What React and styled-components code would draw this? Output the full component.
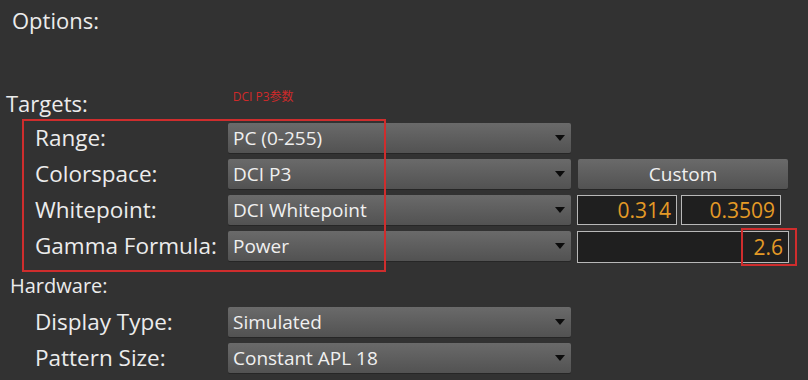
import styled, { createGlobalStyle } from "styled-components";

const GlobalStyle = createGlobalStyle`
  body {
    margin: 0;
    background: #323232;
    font-family: "Open Sans", "Noto Sans", "Noto Sans CJK SC", sans-serif;
    color: #ececec;
  }
`;

const Page = styled.div`
  position: relative;
  width: 808px;
  height: 380px;
  overflow: hidden;
  background: #323232;
`;

const Title = styled.div`
  font-size: 22px;
  line-height: 30px;
  padding: 5px 0 0 12px;
`;

const SectionHead = styled.div`
  display: flex;
  align-items: flex-start;
  margin: ${(p) => p.$top}px 0 0 ${(p) => p.$left}px;
  font-size: ${(p) => p.$size}px;
  line-height: ${(p) => p.$line}px;
`;

const Note = styled.span`
  margin-left: 145px;
  margin-top: 2px;
  font-size: 12px;
  line-height: 14px;
  color: #d02a2a;
`;

const Grid = styled.div`
  display: grid;
  grid-template-columns: 193px 343px 218px;
  grid-auto-rows: 30px;
  column-gap: 0;
  row-gap: 6px;
  margin-left: 35px;
  margin-top: ${(p) => p.$top}px;
`;

const Label = styled.div`
  font-size: 22.5px;
  line-height: 30px;
  white-space: nowrap;
`;

const Select = styled.div`
  display: flex;
  align-items: center;
  justify-content: space-between;
  padding: 0 6px 0 5px;
  background: linear-gradient(#6a6a6a, #525252);
  border-radius: 2px;
  box-shadow: 0 1px 0 #262626;
  font-size: 19px;
  color: #f0f0f0;
`;

const Arrow = styled.span`
  width: 0;
  height: 0;
  border-left: 5px solid transparent;
  border-right: 5px solid transparent;
  border-top: 6px solid #0c0c0c;
`;

const Side = styled.div`
  display: flex;
  gap: 4px;
  padding-left: 6px;
`;

const Button = styled.div`
  flex: 1;
  margin: 0 1px 0 1px;
  display: flex;
  align-items: center;
  justify-content: center;
  background: linear-gradient(#6a6a6a, #525252);
  border-radius: 2px;
  box-shadow: 0 1px 0 #262626;
  font-size: 19px;
  color: #f0f0f0;
`;

const Field = styled.div`
  width: ${(p) => (p.$w ? `${p.$w}px` : "auto")};
  flex: ${(p) => (p.$w ? "none" : 1)};
  height: ${(p) => p.$h || 30}px;
  box-sizing: border-box;
  border: 1px solid #b8b8b8;
  background: #1f1f1f;
  display: flex;
  align-items: center;
  justify-content: flex-end;
  padding-right: 5px;
  font-size: 21px;
  color: #e49a26;
`;

const Mark = styled.div`
  position: absolute;
  left: ${(p) => p.$x}px;
  top: ${(p) => p.$y}px;
  width: ${(p) => p.$w}px;
  height: ${(p) => p.$h}px;
  box-sizing: border-box;
  border: 2px solid #cf2d2d;
  pointer-events: none;
`;

const Dropdown = ({ value }) => (
  <Select>
    <span>{value}</span>
    <Arrow />
  </Select>
);

const App = () => (
  <Page>
    <GlobalStyle />
    <Title>Options:</Title>
    <SectionHead $top={53} $left={6} $size={22} $line={30}>
      Targets:
      <Note>DCI P3参数</Note>
    </SectionHead>
    <Grid $top={5}>
      <Label>Range:</Label>
      <Dropdown value="PC (0-255)" />
      <div />
      <Label>Colorspace:</Label>
      <Dropdown value="DCI P3" />
      <Side>
        <Button>Custom</Button>
      </Side>
      <Label>Whitepoint:</Label>
      <Dropdown value="DCI Whitepoint" />
      <Side>
        <Field $w={100}>0.314</Field>
        <Field $w={100}>0.3509</Field>
      </Side>
      <Label>Gamma Formula:</Label>
      <Dropdown value="Power" />
      <Side>
        <Field $h={32}>2.6</Field>
      </Side>
    </Grid>
    <SectionHead $top={12} $left={10} $size={20} $line={26}>
      Hardware:
    </SectionHead>
    <Grid $top={8}>
      <Label>Display Type:</Label>
      <Dropdown value="Simulated" />
      <div />
      <Label>Pattern Size:</Label>
      <Dropdown value="Constant APL 18" />
      <div />
    </Grid>
    <Mark $x={22} $y={119} $w={364} $h={153} />
    <Mark $x={741} $y={228} $w={56} $h={38} />
  </Page>
);

export default App;
